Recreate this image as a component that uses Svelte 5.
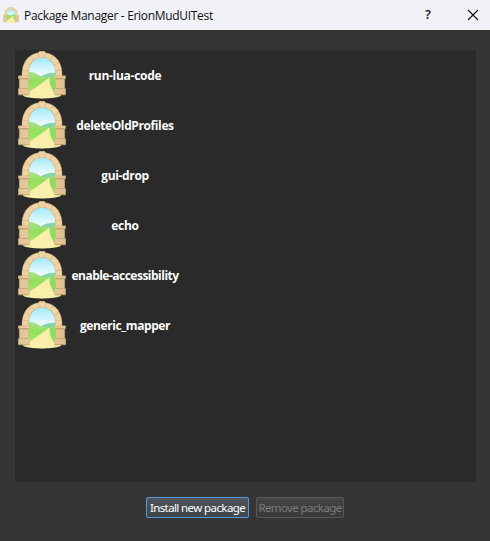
<script>
  const packages = [
    { name: 'run-lua-code', tracking: -0.28 },
    { name: 'deleteOldProfiles', tracking: -0.39 },
    { name: 'gui-drop', tracking: -0.34 },
    { name: 'echo', tracking: -0.25 },
    { name: 'enable-accessibility', tracking: -0.51 },
    { name: 'generic_mapper', tracking: -0.4 }
  ];
</script>

{#snippet gate(size, id)}
  <svg class="gate" width={size} height={size} viewBox="0 0 48 48" aria-hidden="true">
    <defs>
      <linearGradient id="sky{id}" x1="0" y1="0" x2="0" y2="1">
        <stop offset="0" stop-color="#9ce8f8" />
        <stop offset=".45" stop-color="#effcff" />
      </linearGradient>
      <linearGradient id="hill{id}" x1="0" y1="0" x2="0" y2="1">
        <stop offset="0" stop-color="#b0e092" />
        <stop offset=".35" stop-color="#93df5c" />
        <stop offset="1" stop-color="#b5e778" />
      </linearGradient>
      <linearGradient id="stone{id}" x1="0" y1="0" x2="1" y2="0">
        <stop offset="0" stop-color="#e2c597" />
        <stop offset=".5" stop-color="#ecd1a1" />
        <stop offset="1" stop-color="#dfbf8e" />
      </linearGradient>
      <clipPath id="opening{id}">
        <path d="M10 45V24C10 13 16 6 24 6s14 7 14 18v21Z" />
      </clipPath>
    </defs>
    <ellipse cx="24" cy="44.300" rx="19" ry="3.200" fill="#dfe997" />
    <g clip-path="url(#opening{id})">
      <path d="M9 5h30v43H9Z" fill="url(#sky{id})" />
      <path d="M22 26q7-5 17-4v8H22Z" fill="#86d5a9" />
      <path d="M9 20.500q8 .5 14 5l8 1 8-1.500V48H9Z" fill="url(#hill{id})" />
      <path d="M32 27q4-1.500 7-1.500V45l-2-1q-5-8-5-17Z" fill="#8bdf60" />
    </g>
    <path
      d="M8 45.500q1-3 6-6.500Q23 33 31.500 26.500q-.5 6.500 2.500 11.500 2 4.500 5.500 7.500-7 1.700-15 1.700T8 45.500Z"
      fill="#faefaa"
    />
    <path
      d="M4 25C3.500 13 9 3.500 20.500 1.700L21.500.3h5l1 1.400C39 3.500 44.500 13 44 25h-6.200c0-11.500-5-18.500-13.800-18.500S10.200 13.500 10.200 25Z"
      fill="#eed3a3"
      stroke="#d4b484"
      stroke-width=".4"
    />
    <path
      d="m4.500 19 6 1M7 11.500l5.500 3M13 5l3.500 4.500M20.500 1.700l.8 5M27.500 1.700l-.8 5M35 5l-3.500 4.500M41 11.500l-5.500 3M43.500 19l-6 1"
      stroke="#d3b383"
      stroke-width=".6"
    />
    <g fill="url(#stone{id})" stroke="#ccad7e" stroke-width=".35">
      <path d="M1.300 27.500h9v10h-9ZM37.700 27.500h9v10h-9Z" />
      <path d="M.3 24.800h11.500v2.700H.3ZM36.200 24.800h11.500v2.700H36.200Z" />
      <path d="M.3 37.500h11.200v6.300H.3ZM36.500 37.500h11.200v6.300H36.500Z" />
    </g>
    <path d="M1 28h9.500M37.500 28H47M.5 43.700h11M36.500 43.700h11" stroke="#b7976a" stroke-width=".6" />
  </svg>
{/snippet}

<div class="window">
  <header>
    {@render gate(16, 'title')}
    <span class="title">Package Manager - ErionMudUITest</span>
    <button class="caption help" aria-label="Help">?</button>
    <button class="caption close" aria-label="Close">
      <svg width="12" height="12" viewBox="0 0 12 12">
        <path d="m1 1 10 10M11 1 1 11" fill="none" stroke="#111" stroke-width="1.100" />
      </svg>
    </button>
  </header>
  <main>
    <ul>
      {#each packages as item, index}
        <li>
          {@render gate(48, index)}
          <span class="name" style:letter-spacing="{item.tracking}px">{item.name}</span>
        </li>
      {/each}
    </ul>
    <footer>
      <button class="action primary"><span>Install new package</span></button>
      <button class="action remove" disabled><span>Remove package</span></button>
    </footer>
  </main>
</div>

<style>
  :global(body) { margin: 0; background: #353535; }
  * { box-sizing: border-box; }
  .window {
    width: 490px;
    height: 541px;
    display: flex;
    flex-direction: column;
    background: #353535;
    font-family: "Open Sans", "Noto Sans", sans-serif;
    overflow: hidden;
  }
  header {
    height: 30px;
    flex: none;
    display: flex;
    align-items: center;
    padding-left: 3px;
    background: #f0f2f8;
    color: #101010;
  }
  .gate { display: block; flex: none; }
  .title {
    margin-left: 5px;
    padding-top: 1px;
    font-size: 12px;
    line-height: 16px;
    letter-spacing: -0.31px;
    white-space: nowrap;
  }
  button { padding: 0; margin: 0; font-family: inherit; }
  .caption {
    width: 45px;
    height: 30px;
    border: 0;
    background: none;
    display: flex;
    align-items: center;
    justify-content: center;
    color: #111;
  }
  .help { margin-left: auto; font-size: 13px; font-weight: 600; padding: 0 0 2px 1px; }
  .close { margin-right: -5px; padding-bottom: 1px; }
  main { flex: 1; display: flex; flex-direction: column; padding: 20px 14px 0 15px; }
  ul {
    list-style: none;
    margin: 0;
    padding: 0 0 0 3px;
    height: 432px;
    background: #2a2a2a;
  }
  li { height: 50px; display: flex; align-items: center; }
  .name {
    width: 118px;
    padding-top: 2px;
    text-align: center;
    font-size: 12px;
    line-height: 16px;
    font-weight: 700;
    color: #fff;
    white-space: nowrap;
  }
  footer { display: flex; gap: 7px; padding: 15px 0 0 131px; }
  .action {
    height: 21px;
    display: flex;
    align-items: center;
    justify-content: center;
    font-family: "Noto Sans", sans-serif;
    font-size: 11.5px;
    line-height: 16px;
    white-space: nowrap;
    border-radius: 2px;
  }
  .action span { padding-top: 1px; }
  .primary {
    width: 103px;
    color: #fff;
    border: 1px solid #5299e0;
    background: linear-gradient(#50555c, #40454c);
    letter-spacing: -0.6px;
  }
  .remove {
    width: 88px;
    color: #7b7b7b;
    border: 1px solid #575757;
    background: linear-gradient(#454545, #393939);
    letter-spacing: -0.6px;
  }
</style>
